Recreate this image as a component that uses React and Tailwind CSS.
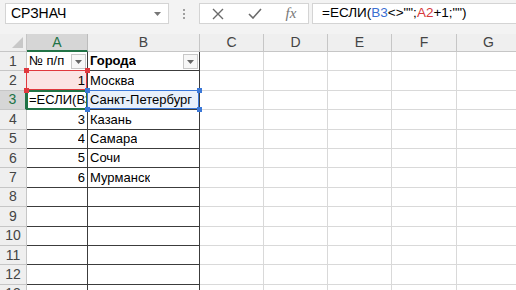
import React from 'react';

const COLS = [
  { k: 'A', w: 'w-[61px]' },
  { k: 'B', w: 'w-[112px]' },
  { k: 'C', w: 'w-[64px]' },
  { k: 'D', w: 'w-[64px]' },
  { k: 'E', w: 'w-[64px]' },
  { k: 'F', w: 'w-[65px]' },
  { k: 'G', w: 'w-[64px]' },
];

const DATA = {
  1: ['№ п/п', 'Города'],
  2: ['1', 'Москва'],
  3: ['=ЕСЛИ(ВЗ', 'Санкт-Петербург'],
  4: ['3', 'Казань'],
  5: ['4', 'Самара'],
  6: ['5', 'Сочи'],
  7: ['6', 'Мурманск'],
};

const FilterBtn = () => (
  <div className="absolute right-[1px] top-[2px] w-[15px] h-[15px] border border-[#c8c8c8] bg-[#f7f7f7] flex items-center justify-center">
    <svg width="7" height="4" viewBox="0 0 7 4">
      <path d="M0 0h7L3.5 4z" fill="#666" />
    </svg>
  </div>
);

const Corner = ({ c, className }) => (
  <div className={`absolute z-20 w-[5px] h-[5px] ${c} ${className}`} />
);

const Cell = ({ row, col }) => {
  const inTable = col < 2;
  const val = DATA[row] ? DATA[row][col] : null;
  let cls = 'relative h-full shrink-0 border-b ';
  cls += inTable ? 'border-r border-r-[#3c3c3c] border-b-[#3c3c3c] ' : 'border-r border-r-[#d9d9d9] border-b-[#d9d9d9] ';
  if (row === 2 && col === 0) cls += 'bg-[#fbe4e4] ';
  if (row === 3 && col === 1) cls += 'bg-[#e8f0fb] ';
  const numeric = col === 0 && row > 1 && row !== 3;
  return (
    <div className={`${cls}${COLS[col].w} flex items-end ${numeric ? 'justify-end pr-[2px]' : 'pl-[2px]'} pb-[1px]`}>
      {val && (
        <span className={`whitespace-nowrap overflow-hidden leading-[16px] ${row === 1 && col === 1 ? 'font-bold' : ''}`}>{val}</span>
      )}
      {row === 1 && inTable && <FilterBtn />}
      {row === 2 && col === 0 && (
        <>
          <div className="absolute z-10 -left-[1px] -top-[1px] right-0 bottom-0 border border-[#e0393e]" />
          <Corner c="bg-[#e0393e]" className="-left-[3px] -top-[3px]" />
          <Corner c="bg-[#e0393e]" className="-right-[3px] -top-[3px]" />
          <Corner c="bg-[#e0393e]" className="-left-[3px] -bottom-[3px]" />
          <Corner c="bg-[#e0393e]" className="-right-[3px] -bottom-[3px]" />
        </>
      )}
      {row === 3 && col === 0 && (
        <div className="absolute z-10 -left-[1px] -top-[1px] -right-[1px] -bottom-[1px] border-2 border-[#217346]" />
      )}
      {row === 3 && col === 1 && (
        <>
          <div className="absolute z-10 -left-[1px] -top-[1px] right-0 bottom-0 border border-[#3b78d8]" />
          <Corner c="bg-[#3b78d8]" className="-left-[3px] -top-[3px]" />
          <Corner c="bg-[#3b78d8]" className="-right-[3px] -top-[3px]" />
          <Corner c="bg-[#3b78d8]" className="-left-[3px] -bottom-[3px]" />
          <Corner c="bg-[#3b78d8]" className="-right-[3px] -bottom-[3px]" />
        </>
      )}
    </div>
  );
};

export default function App() {
  const rows = Array.from({ length: 13 }, (_, i) => i + 1);
  return (
    <div
      className="w-[516px] h-[290px] overflow-hidden bg-white text-[13px] text-black"
      style={{ fontFamily: '"Liberation Sans", Arial, sans-serif' }}
    >
      {/* toolbar */}
      <div className="h-[34px] bg-[#f3f3f3] flex items-start pt-[3px] pl-[5px]">
        <div className="w-[164px] h-[21px] bg-white border border-[#d4d4d4] flex items-center pl-[5px] pr-[7px] justify-between">
          <span className="text-[14px]">СРЗНАЧ</span>
          <svg width="7" height="4" viewBox="0 0 7 4">
            <path d="M0 0h7L3.5 4z" fill="#777" />
          </svg>
        </div>
        <div className="w-[30px] h-[21px] flex flex-col items-center justify-center gap-[2px]">
          <div className="w-[2px] h-[2px] bg-[#a0a0a0]" />
          <div className="w-[2px] h-[2px] bg-[#a0a0a0]" />
          <div className="w-[2px] h-[2px] bg-[#a0a0a0]" />
        </div>
        <div className="w-[110px] h-[21px] bg-white border border-[#d4d4d4] flex items-center">
          <div className="w-[36px] flex justify-center">
            <svg width="12" height="12" viewBox="0 0 12 12">
              <path d="M1 1l10 10M11 1L1 11" stroke="#6a6a6a" strokeWidth="1.4" />
            </svg>
          </div>
          <div className="w-[38px] flex justify-center">
            <svg width="14" height="11" viewBox="0 0 14 11">
              <path d="M1 6l4 4L13 1" stroke="#6a6a6a" strokeWidth="1.6" fill="none" />
            </svg>
          </div>
          <div className="w-[34px] flex justify-center">
            <span className="italic text-[#777] text-[15px]" style={{ fontFamily: '"Liberation Serif", serif' }}>
              fx
            </span>
          </div>
        </div>
        <div className="ml-[3px] flex-1 h-[21px] bg-white border border-[#d4d4d4] border-r-0 flex items-center pl-[9px] text-[13.5px] whitespace-nowrap">
          <span>=ЕСЛИ(</span>
          <span className="text-[#3b6fd1]">B3</span>
          <span>&lt;&gt;"";</span>
          <span className="text-[#d6383c]">A2</span>
          <span>+1;"")</span>
        </div>
      </div>

      {/* column headers */}
      <div className="flex h-[18px] bg-[#f3f3f3] text-[14px]">
        <div className="relative w-[27px] shrink-0 h-full border-r border-b border-[#c6c6c6] bg-[#efefef]">
          <svg className="absolute right-[3px] bottom-[3px]" width="11" height="11" viewBox="0 0 11 11">
            <path d="M11 0v11H0z" fill="#c8c8c8" />
          </svg>
        </div>
        {COLS.map((c, i) => (
          <div
            key={c.k}
            className={`${c.w} shrink-0 h-full flex items-center justify-center border-r ${
              i === 0
                ? 'bg-[#d6d6d6] text-[#217346] border-b-2 border-b-[#217346] border-r-[#bcbcbc]'
                : 'bg-[#efefef] text-[#444] border-b border-[#c6c6c6]'
            }`}
          >
            {c.k}
          </div>
        ))}
      </div>

      {/* rows */}
      {rows.map((r) => (
        <div key={r} className="flex h-[19.4px]">
          <div
            className={`w-[27px] shrink-0 h-full flex items-center justify-center border-b text-[14px] ${
              r === 3
                ? 'bg-[#d6d6d6] text-[#217346] border-r-2 border-r-[#217346] border-b-[#c6c6c6]'
                : 'bg-[#efefef] text-[#444] border-r border-[#c6c6c6]'
            }`}
          >
            {r}
          </div>
          {COLS.map((c, i) => (
            <Cell key={c.k} row={r} col={i} />
          ))}
        </div>
      ))}
    </div>
  );
}
